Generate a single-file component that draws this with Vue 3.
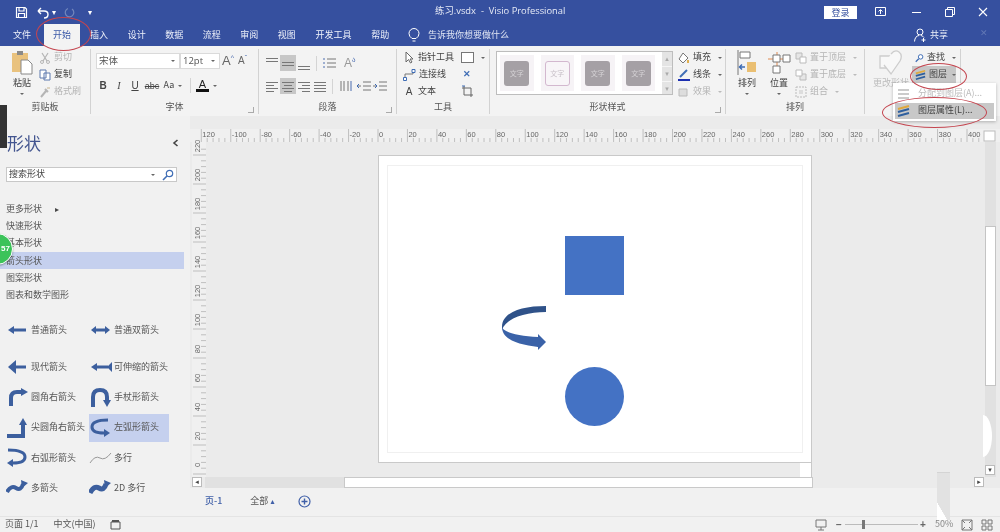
<script setup>
const tabs = ['文件', '开始', '插入', '设计', '数据', '流程', '审阅', '视图', '开发工具', '帮助']

const stencils = [
  { name: '更多形状', more: true },
  { name: '快速形状' },
  { name: '基本形状' },
  { name: '箭头形状', active: true },
  { name: '图案形状' },
  { name: '图表和数学图形' },
]

const shapes = [
  { name: '普通箭头', d: 'M5 11H20', head: '8,7 2,11 8,15', w: 3 },
  { name: '普通双箭头', d: 'M6 11H17', head: '7,7 2,11 7,15 M16,7 21,11 16,15', w: 3 },
  { name: '现代箭头', d: 'M6 11H20', head: '10,4 2,11 10,18', w: 3 },
  { name: '可伸缩的箭头', d: 'M6 11H19', head: '8,7 2,11 8,15 M23,6 18,11 23,16', w: 3 },
  { name: '圆角右箭头', d: 'M5 19V11Q5 5 11 5H16', head: '15,1 22,5 15,9', w: 4 },
  { name: '手杖形箭头', d: 'M4 20V10Q4 3 11 3Q18 3 18 10V14', head: '14,13 18,20 22,13', w: 4 },
  { name: '尖圆角右箭头', d: 'M1 19H17V7', head: '13,8 17,1 21,8', w: 4 },
  { name: '左弧形箭头', d: 'M19 3Q3 3 3 10Q3 16 15 16', head: '15,12 21,16 15,20', w: 3 },
  { name: '右弧形箭头', d: 'M2 3Q19 3 19 10Q19 16 7 16', head: '7,12 1,16 7,20', w: 3 },
  { name: '多行', d: 'M1 16Q6 8 11 11T22 6', head: '', w: 1, thin: true },
  { name: '多箭头', d: 'M1 15Q5 8 10 11T17 7', head: '15,3 22,6 16,11', w: 4 },
  { name: '2D 多行', d: 'M1 16Q5 8 10 11T17 7', head: '15,3 22,6 16,11', w: 5 },
]

const styleItems = [{}, { outline: true }, {}, {}]

const vAlign = [
  { sel: false, lines: [[2, 14, 3], [2, 14, 6]] },
  { sel: true, lines: [[2, 14, 7], [2, 14, 10]] },
  { sel: false, lines: [[2, 14, 11], [2, 14, 14]] },
]
const hAlign = [
  { sel: false, lines: [[2, 14, 4], [2, 10, 7], [2, 14, 10], [2, 10, 13]] },
  { sel: true, lines: [[2, 14, 4], [4, 12, 7], [2, 14, 10], [4, 12, 13]] },
  { sel: false, lines: [[2, 14, 4], [6, 14, 7], [2, 14, 10], [6, 14, 13]] },
  { sel: false, lines: [[2, 14, 4], [2, 14, 7], [2, 14, 10], [2, 14, 13]] },
]

// ruler maths, 0 sits at the page corner
const hTicks = []
for (let v = -120; v <= 410; v += 4) {
  hTicks.push({ x: 188 + (v * 29.45) / 20, major: v % 20 === 0, label: v })
}
const vTicks = []
for (let v = 0; v <= 225; v += 4) {
  vTicks.push({ y: 323 - (v * 29) / 20, major: v % 20 === 0, label: v })
}
</script>

<template>
<div class="app">
  <header class="titlebar">
    <div class="quick">
      <svg width="13" height="13" viewBox="0 0 13 13"><path d="M1.500 1.500H10L11.500 3V11.500H1.500ZM4 1.500V5H9V1.500M3.500 11.500V7.500H9.500V11.500" fill="none" stroke="#fff" stroke-width="1.200"/></svg>
      <svg class="undo" width="14" height="13" viewBox="0 0 14 13"><path d="M2 5H8Q12 5 12 8.500T8 12M2 5L5 2M2 5L5 8" fill="none" stroke="#fff" stroke-width="1.400"/></svg>
      <span class="caret">▾</span>
      <svg class="redo" width="12" height="13" viewBox="0 0 12 13"><path d="M9 3A4.300 4.300 0 1 1 5 2.500" fill="none" stroke="#7387bd" stroke-width="1.200"/></svg>
      <span class="caret quick-more">▾</span>
    </div>
    <div class="doc-title">练习.vsdx&nbsp; -&nbsp; Visio Professional</div>
    <div class="window-btns">
      <span class="login">登录</span>
      <svg width="11" height="10" viewBox="0 0 11 10"><path d="M.5 .5H10.500V8.500H.5ZM5.500 7V3M3.500 4.500 5.500 2.500 7.500 4.500" fill="none" stroke="#fff"/></svg>
      <span class="min"></span>
      <svg width="10" height="10" viewBox="0 0 10 10"><path d="M.5 2.500H7.500V9.500H.5ZM2.500 2.500V.5H9.500V7.500H7.500" fill="none" stroke="#fff"/></svg>
      <svg width="10" height="10" viewBox="0 0 10 10"><path d="M1 1 9 9M9 1 1 9" stroke="#fff" stroke-width="1.100"/></svg>
    </div>
  </header>

  <nav class="tabbar">
    <span v-for="tab in tabs" :key="tab" class="tab" :class="{ active: tab === '开始', wide: tab === '开发工具' }">{{ tab }}</span>
    <span class="tell">
      <svg width="12" height="15" viewBox="0 0 12 15"><path d="M4 10.500Q1 8.500 1 5.500A5 5 0 0 1 11 5.500Q11 8.500 8 10.500ZM4.500 13H7.500" fill="none" stroke="#fff"/></svg>
      告诉我你想要做什么
    </span>
    <span class="share">
      <svg width="14" height="14" viewBox="0 0 14 14"><path d="M7 7A3 3 0 1 0 7 1 3 3 0 0 0 7 7ZM1.500 13.500Q2 8 6 7.500M8 7.500Q10 8 11 9.500M10.500 10V14M8.500 12H12.500" fill="none" stroke="#fff"/></svg>
      共享
    </span>
    <span class="share-x">✕</span>
  </nav>

  <section class="ribbon">
    <div class="group g-clip">
      <div class="group-body">
        <div class="big">
          <svg width="22" height="27" viewBox="0 0 22 27"><path d="M1 4H17V23H1Z" fill="#e9c27e"/><path d="M6 2H12V6H6Z" fill="#8a8a8a"/><path d="M10 11H17L21 15V25H10Z" fill="#fff" stroke="#888"/></svg>
          <span>粘贴</span>
          <i class="chev"></i>
        </div>
        <div class="stack">
          <div class="mini off"><svg width="12" height="12" viewBox="0 0 12 12"><path d="M3 1 8 9M9 1 4 9" stroke="#b5b5b5" stroke-width="1.200"/><circle cx="3" cy="10" r="1.500" fill="none" stroke="#b5b5b5"/><circle cx="9" cy="10" r="1.500" fill="none" stroke="#b5b5b5"/></svg>剪切</div>
          <div class="mini"><svg width="12" height="12" viewBox="0 0 12 12"><path d="M1 1H7V9H1ZM5 4H11V11H5Z" fill="#fff" stroke="#5c78ad"/></svg>复制</div>
          <div class="mini off"><svg width="12" height="12" viewBox="0 0 12 12"><path d="M2 11 7 5M6 3 9 6" stroke="#b5b5b5" stroke-width="2"/><path d="M9 1V3M11 2H10" stroke="#c9b58e"/></svg>格式刷</div>
        </div>
      </div>
      <div class="group-label">剪贴板</div>
    </div>

    <div class="group g-font">
      <div class="group-body col">
        <div class="font-row">
          <span class="select font-name">宋体<i class="chev"></i></span>
          <span class="select font-size">12pt<i class="chev"></i></span>
          <span class="grow-a">A<sup>^</sup></span>
          <span class="grow-a small-a">A<sup>ˇ</sup></span>
        </div>
        <div class="font-row second">
          <b class="cell">B</b><i class="cell it">I</i><u class="cell">U</u><span class="cell abc">abc</span><span class="cell aa">Aa<i class="chev inline"></i></span>
          <span class="sep"></span>
          <span class="color-a">A</span><i class="chev inline"></i>
        </div>
      </div>
      <div class="group-label">字体</div>
      <i class="launcher"></i>
    </div>

    <div class="group g-para">
      <div class="group-body col">
        <div class="para-row">
          <svg v-for="(a, i) in vAlign" :key="i" class="para-icon" :class="{ sel: a.sel }" viewBox="0 0 16 16"><path v-for="(l, j) in a.lines" :key="j" :d="`M${l[0]} ${l[2]}.5H${l[1]}`" stroke="#777"/></svg>
          <span class="sep para-sep"></span>
          <svg class="para-icon" viewBox="0 0 16 16"><path d="M5 4H14M5 8H14M5 12H14" stroke="#777"/><path d="M1 4H3M1 8H3M1 12H3" stroke="#4a6cb0"/></svg>
          <span class="a-big">A<sup>ა</sup></span>
        </div>
        <div class="para-row second">
          <svg v-for="(a, i) in hAlign" :key="i" class="para-icon" :class="{ sel: a.sel }" viewBox="0 0 16 16"><path v-for="(l, j) in a.lines" :key="j" :d="`M${l[0]} ${l[2]}.5H${l[1]}`" stroke="#777"/></svg>
          <span class="sep"></span>
          <svg class="para-icon" viewBox="0 0 16 16"><path d="M3 3V13M6 3V13M10 3V13" stroke="#777"/><path d="M13 3V13" stroke="#4a6cb0"/></svg>
          <svg class="para-icon indent" viewBox="0 0 16 16"><path d="M7 4H15M7 8H15M7 12H15M1 8H5" stroke="#777"/><path d="M3 6 1 8 3 10" fill="none" stroke="#3c6ab5"/></svg>
          <svg class="para-icon" viewBox="0 0 16 16"><path d="M7 4H15M7 8H15M7 12H15M1 8H5" stroke="#777"/><path d="M3 6 5 8 3 10" fill="none" stroke="#3c6ab5"/></svg>
        </div>
      </div>
      <div class="group-label">段落</div>
      <i class="launcher"></i>
    </div>

    <div class="group g-tools">
      <div class="stack">
        <div class="mini tool">
          <svg width="12" height="13" viewBox="0 0 12 13"><path d="M3 1V11L5.500 8.500 7.500 12 9 11 7 8H10Z" fill="#fff" stroke="#666"/></svg>指针工具
          <span class="tool-rect"></span><i class="chev inline"></i>
        </div>
        <div class="mini tool">
          <svg width="13" height="12" viewBox="0 0 13 12"><path d="M2 9V5H10V3" fill="none" stroke="#777"/><path d="M.5 8.500H3.500V11.500H.5ZM9 .5H12V3.500H9Z" fill="#fff" stroke="#3f6db5"/></svg>连接线
          <span class="tool-x">✕</span>
        </div>
        <div class="mini tool">
          <span class="tool-a">A</span>文本
          <svg class="tool-crop" width="13" height="13" viewBox="0 0 13 13"><path d="M3 1V10H12M1 3H10V12" fill="none" stroke="#666"/><path d="M1 1H4" stroke="#3f6db5"/></svg>
        </div>
      </div>
      <div class="group-label">工具</div>
    </div>

    <div class="group g-styles">
      <div class="group-body">
        <div class="gallery">
          <div v-for="(s, i) in styleItems" :key="i" class="style-item">
            <span class="swatch" :class="{ outline: s.outline }">文字</span>
          </div>
          <div class="gallery-scroll"><i>▴</i><i>▾</i><i>▾</i></div>
        </div>
        <div class="stack fills">
          <div class="mini"><svg width="12" height="12" viewBox="0 0 12 12"><path d="M5 1 10 6 5 11 1 7Z" fill="#fff" stroke="#777"/><path d="M10 8V11" stroke="#e0b050" stroke-width="2"/></svg>填充<i class="chev inline"></i></div>
          <div class="mini"><svg width="12" height="12" viewBox="0 0 12 12"><path d="M2 8 9 1" stroke="#3f6db5" stroke-width="2"/><path d="M0 11H12" stroke="#1c2fb0" stroke-width="2"/></svg>线条<i class="chev inline"></i></div>
          <div class="mini off"><svg width="12" height="12" viewBox="0 0 12 12"><path d="M1 3H9V10H1Z" fill="#ddd" stroke="#bbb"/></svg>效果<i class="chev inline"></i></div>
        </div>
      </div>
      <div class="group-label">形状样式</div>
      <i class="launcher"></i>
    </div>

    <div class="group g-arrange">
      <div class="group-body">
        <div class="big">
          <svg width="22" height="27" viewBox="0 0 22 27"><path d="M2 1V26" stroke="#777"/><path d="M4 3H14V9H4Z" fill="#fff" stroke="#777"/><path d="M11 13H20V23H11Z" fill="#eabf72"/><path d="M4 18H9M6 15.500 3.500 18 6 20.500" fill="none" stroke="#3f6db5" stroke-width="1.500"/></svg>
          <span>排列</span>
          <i class="chev"></i>
        </div>
        <div class="big">
          <svg width="24" height="27" viewBox="0 0 24 27"><path d="M1 10H18M10 3V24" stroke="#e08a50"/><path d="M6 6H13V13H6ZM16 6H23V13H16ZM6 17H13V24H6Z" fill="#fff" stroke="#777"/></svg>
          <span>位置</span>
          <i class="chev"></i>
        </div>
        <div class="stack order">
          <div class="mini off"><svg width="12" height="12" viewBox="0 0 12 12"><path d="M1 1H7V7H1Z" fill="#e6e6e6" stroke="#bbb"/><path d="M5 5H11V11H5Z" fill="#fff" stroke="#bbb"/></svg>置于顶层<i class="chev inline"></i></div>
          <div class="mini off"><svg width="12" height="12" viewBox="0 0 12 12"><path d="M5 5H11V11H5Z" fill="#e6e6e6" stroke="#bbb"/><path d="M1 1H7V7H1Z" fill="#fff" stroke="#bbb"/></svg>置于底层<i class="chev inline"></i></div>
          <div class="mini off"><svg width="12" height="12" viewBox="0 0 12 12"><path d="M1 1H11V11H1Z" fill="none" stroke="#bbb" stroke-dasharray="2 1"/><path d="M4 4H8V8H4Z" fill="#ddd"/></svg>组合<i class="chev inline"></i></div>
        </div>
      </div>
      <div class="group-label">排列</div>
    </div>

    <div class="group g-edit">
      <div class="group-body">
        <div class="big change off">
          <svg width="24" height="27" viewBox="0 0 24 27"><path d="M1 7H13V19H1Z" fill="#f8f8f8" stroke="#cdcdcd" stroke-width="1.300"/><path d="M12 5Q16 0 20 3T21 12L12 25 5 16" fill="#f8f8f8" stroke="#cdcdcd" stroke-width="1.300"/></svg>
          <span>更改形状</span>
        </div>
        <div class="edit-col">
          <div class="mini"><svg width="12" height="12" viewBox="0 0 12 12"><circle cx="7.500" cy="4.500" r="3" fill="#fff" stroke="#3f6db5" stroke-width="1.300"/><path d="M5 7 1 11" stroke="#3f6db5" stroke-width="1.600"/></svg>查找<i class="chev inline"></i></div>
          <div class="mini layer-btn"><svg width="13" height="12" viewBox="0 0 13 12"><path d="M1 4 12 1" stroke="#e0a93e" stroke-width="2"/><path d="M1 7 12 4M1 11 12 8" stroke="#2f5f9e" stroke-width="2"/></svg>图层<i class="chev inline"></i></div>
        </div>
      </div>
    </div>
  </section>

  <main class="workspace">
    <aside class="sidebar">
      <div class="side-head">
        <h2>形状</h2>
        <svg width="7" height="8" viewBox="0 0 7 8"><path d="M5.500 1 2 4 5.500 7" fill="none" stroke="#444" stroke-width="1.600"/></svg>
      </div>
      <div class="search">
        <span>搜索形状</span>
        <i class="chev"></i>
        <svg width="12" height="12" viewBox="0 0 12 12"><circle cx="7.500" cy="4.500" r="3.200" fill="none" stroke="#3f6db5" stroke-width="1.200"/><path d="M5 7 1 11" stroke="#3f6db5" stroke-width="1.600"/></svg>
      </div>
      <ul class="stencils">
        <li v-for="s in stencils" :key="s.name" :class="{ active: s.active }">
          {{ s.name }}<span v-if="s.more" class="more">▸</span>
        </li>
      </ul>
      <div class="shape-grid">
        <div v-for="s in shapes" :key="s.name" class="shape-cell" :class="{ picked: s.name === '左弧形箭头' }">
          <svg width="24" height="22" viewBox="0 0 24 22">
            <path :d="s.d" fill="none" :stroke="s.thin ? '#999' : '#3c5f9e'" :stroke-width="s.w"/>
            <path v-if="s.head" :d="'M' + s.head" fill="#3c5f9e"/>
          </svg>
          <span>{{ s.name }}</span>
        </div>
      </div>
    </aside>

    <div class="drawing">
      <svg class="ruler-top" width="810" height="13" viewBox="0 0 810 13">
        <rect width="810" height="13" fill="#f0f0f0"/>
        <template v-for="t in hTicks" :key="t.label">
          <path :d="`M${t.x} ${t.major ? 0 : 9}V13`" stroke="#aaa" stroke-width=".7"/>
          <text v-if="t.major && t.x > 10 && t.x < 785" :x="t.x + 1" y="8" class="tick-label">{{ t.label === -120 ? 120 : t.label }}</text>
        </template>
        <rect x="794" y="2" width="11" height="10" fill="#fff" stroke="#bbb"/>
      </svg>
      <div class="drawing-mid">
        <svg class="ruler-left" width="14" height="335" viewBox="0 0 14 335">
          <rect width="14" height="335" fill="#f0f0f0"/>
          <template v-for="t in vTicks" :key="t.label">
            <path :d="`M${t.major ? 1 : 9} ${t.y + 9}H14`" stroke="#aaa" stroke-width=".7"/>
            <text v-if="t.major" class="tick-label v-label" :transform="`translate(8 ${t.y}) rotate(-90)`">{{ t.label }}</text>
          </template>
        </svg>
        <div class="canvas">
          <div class="page">
            <div class="page-inner"></div>
            <div class="square"></div>
            <div class="circle"></div>
            <svg class="curve" width="46" height="46" viewBox="0 0 46 46">
              <path d="M44 1C20 1 0 7 0 22V25C4 13 24 7 44 7Z" fill="#2f5289"/>
              <path d="M0 22C0 35 18 40 36 42V45L44 37 36 29V32C18 31 2 28 0 22Z" fill="#3a62a8"/>
            </svg>
          </div>
          <div class="page-tail"></div>
          <div class="vtrack">
            <div class="vthumb"></div>
          </div>
          <div class="vscroll-arc"></div>
          <span class="scroll-btn down">▾</span>
        </div>
      </div>
      <div class="hscroll">
        <span class="scroll-btn left">◂</span>
        <div class="hscroll-track"></div>
        <div class="hscroll-thumb"></div>
        <span class="scroll-btn right">▸</span>
      </div>
      <div class="page-tabs">
        <span class="page-name">页-1</span>
        <span class="page-all">全部 <i>▴</i></span>
        <svg width="13" height="13" viewBox="0 0 13 13"><circle cx="6.500" cy="6.500" r="5.500" fill="none" stroke="#3f5fa8" stroke-width="1.200"/><path d="M6.500 3.500V9.500M3.500 6.500H9.500" stroke="#3f5fa8" stroke-width="1.400"/></svg>
      </div>
    </div>
  </main>

  <footer class="statusbar">
    <span>页面 1/1</span>
    <span class="lang">中文(中国)</span>
    <svg width="11" height="11" viewBox="0 0 11 11"><path d="M1 3H10V10H1Z" fill="none" stroke="#555"/><path d="M2 1H9V3H2Z" fill="#555"/></svg>
    <span class="status-right">
      <svg width="13" height="13" viewBox="0 0 13 13"><path d="M2 2H12V9H2ZM7 9V12M4 12H10" fill="none" stroke="#777"/></svg>
      <span class="zoom-sign minus">−</span>
      <span class="slider"><i></i></span>
      <span class="zoom-sign">+</span>
      <span class="percent">50%</span>
      <svg width="12" height="12" viewBox="0 0 12 12"><path d="M1 1H11V11H1ZM1 1 4 4M11 1 8 4M1 11 4 8M11 11 8 8" fill="none" stroke="#777"/></svg>
      <svg width="12" height="12" viewBox="0 0 12 12"><path d="M1 1H5V5H1ZM7 1H11V5H7ZM1 7H5V11H1ZM7 7H11V11H7Z" fill="none" stroke="#777"/></svg>
    </span>
  </footer>

  <!-- popup and the hand drawn red circles lie over everything -->
  <div class="layer-menu">
    <div class="menu-item muted">
      <svg width="13" height="12" viewBox="0 0 13 12"><path d="M1 3H12M1 7H12M1 11H12" stroke="#bbb" stroke-width="1.500"/></svg>
      分配到图层(A)...
    </div>
    <div class="menu-item hot">
      <svg width="13" height="12" viewBox="0 0 13 12"><path d="M1 4 12 1" stroke="#e0a93e" stroke-width="2"/><path d="M1 7 12 4M1 11 12 8" stroke="#2f5f9e" stroke-width="2"/></svg>
      图层属性(L)...
    </div>
  </div>
  <i class="ring ring-tab"></i>
  <i class="ring ring-layer"></i>
  <i class="ring ring-props"></i>
  <span class="grip"></span>
  <span class="badge">57</span>
  <span class="streak"></span>
</div>
</template>

<style>
html, body { margin: 0; overflow: hidden; }
</style>

<style scoped>
.app { position: relative; width: 1000px; height: 532px; overflow: hidden; display: flex; flex-direction: column; font: 9px/1.2 "Noto Sans CJK SC", "Liberation Sans", sans-serif; color: #555; background: #ebebeb; filter: blur(.35px); }

.titlebar { flex: 0 0 24px; display: flex; align-items: center; position: relative; background: #36509f; color: #fff; }
.quick { display: flex; align-items: center; padding-left: 15px; }
.undo { margin-left: 8px; }
.caret { font-size: 8px; margin-left: 2px; }
.redo { margin-left: 7px; }
.quick-more { margin-left: 13px; }
.doc-title { position: absolute; left: 435px; top: 4px; font-family: "Open Sans", "Noto Sans CJK SC", sans-serif; font-size: 9.400px; line-height: 13px; color: #e6eaf6; }
.window-btns { margin-left: auto; display: flex; align-items: center; gap: 23px; padding-right: 12px; }
.login { width: 33px; height: 13px; margin-right: -5px; background: #fff; color: #36509f; text-align: center; line-height: 13px; }
.min { width: 9px; height: 1px; margin: 0 1px 0 3px; background: #fff; }

.tabbar { flex: 0 0 22px; display: flex; align-items: stretch; position: relative; background: #36509f; color: #eef1fa; }
.tab { width: 37.500px; text-align: center; line-height: 22px; flex: none; }
.tab:first-child { width: 44px; }
.tab.wide { width: 56px; }
.tab.active { color: #3c5aa8; background: #f3f3f3; width: 36px; }
.tab:nth-child(3) { width: 38px; }
.tell { margin-left: 9px; display: flex; align-items: center; gap: 8px; color: #dfe4f3; }
.share { margin-left: auto; display: flex; align-items: center; gap: 3px; font-size: 9px; }
.share-x { margin: 4px 12px 0 32px; color: #6378b5; font-size: 9px; }

.ribbon { flex: 0 0 70px; display: flex; background: #f3f3f3; }
.group { position: relative; display: flex; flex-direction: column; margin: 3px 0 2px; border-right: 1px solid #d2d2d2; box-sizing: border-box; }
.group-body { flex: 1; display: flex; min-height: 0; }
.group-body.col { flex-direction: column; }
.group-label { flex: 0 0 14px; text-align: center; line-height: 14px; color: #555; }
.g-clip { width: 91px; }
.g-font { width: 168px; }
.g-para { width: 138px; }
.g-tools { width: 93px; }
.g-styles { width: 236px; }
.g-arrange { width: 139px; }
.g-edit { width: 96px; }
.launcher { position: absolute; right: 4px; bottom: 1px; width: 5px; height: 5px; border: solid #aaa; border-width: 0 1px 1px 0; }

.big { width: 32px; flex: none; display: flex; flex-direction: column; align-items: center; }
.big svg { height: 27px; margin-bottom: 1px; }
.big span { line-height: 11px; color: #444; }
.chev { display: block; width: 0; height: 0; margin-top: 5px; border: 2px solid transparent; border-top: 2.500px solid #666; border-bottom: 0; }
.chev.inline { display: inline-block; margin: 0 0 0 4px; vertical-align: middle; }
.stack { display: flex; flex-direction: column; }
.mini { height: 17px; display: flex; align-items: center; gap: 3px; color: #444; white-space: nowrap; }
.mini.off, .off span { color: #b4b4b4; }
.mini.off .chev { border-top-color: #bbb; }

.g-clip .big { margin-left: 6px; }
.g-clip .stack { margin-left: 1px; }

.font-row { display: flex; align-items: center; height: 17px; margin: 3px 0 0 5px; }
.font-row.second { margin: 8px 0 0 4px; color: #444; }
.cell { width: 16px; text-align: center; }
.abc { width: 18px; }
.aa { width: 24px; margin-right: 5px; }
.select { display: flex; align-items: center; justify-content: space-between; box-sizing: border-box; height: 16px; background: #fff; border: 1px solid #dadada; padding: 0 4px 0 2px; color: #555; font-size: 9.500px; }
.select .chev { margin-top: 0; }
.font-name { width: 84px; }
.font-size { width: 40px; margin-right: 2px; font-family: "Open Sans", sans-serif; }
.grow-a { width: 16px; font: 13px "Liberation Sans", sans-serif; color: #666; }
.grow-a sup, .a-big sup { font-size: 7px; color: #4a6cb0; }
.small-a { font-size: 10px; }
.it { font: italic 10px "Liberation Serif", serif; }
.font-row b, .font-row u { font: 10px "Liberation Sans", sans-serif; }
.font-row b { font-weight: 700; }
.abc { font: 9px "Liberation Sans", sans-serif; text-decoration: line-through; }
.sep { width: 1px; height: 15px; background: #d4d4d4; }
.color-a { width: 13px; margin-left: 5px; text-align: center; color: #222; font: 11px/10px "Liberation Sans", sans-serif; border-bottom: 3px solid #111; }

.para-row { display: flex; align-items: center; height: 16px; margin: 6px 0 0 5px; }
.para-row.second { margin-top: 7px; }
.para-icon { width: 16px; height: 16px; flex: none; }
.para-icon.sel { background: #c7c7c7; }
.para-row .sep { margin: 0 5px 0 4px; }
.para-sep { margin-left: 4px; }
.a-big { margin-left: 6px; font: 12px "Liberation Sans", sans-serif; color: #999; }
.para-icon.indent { margin-left: 2px; }

.g-tools .stack { flex: 1; padding-left: 6px; }
.tool { position: relative; }
.tool-rect { width: 11px; height: 9px; margin-left: 4px; border: 1px solid #777; background: #fff; }
.tool-x { position: absolute; left: 60px; color: #3f6db5; font-size: 9px; font-weight: 700; }
.tool-a { width: 12px; text-align: center; font: 10px "Liberation Sans", sans-serif; color: #444; }
.tool-crop { position: absolute; left: 58px; }

.gallery { display: flex; align-items: center; box-sizing: border-box; width: 177px; height: 44px; margin: 2px 5px 0 6px; padding-left: 3px; background: #fff; border: 1px solid #bdbdbd; }
.style-item { width: 34px; height: 36px; margin-right: 7px; display: flex; align-items: center; justify-content: center; background: #f6f3f6; }
.swatch { width: 25px; height: 25px; display: flex; align-items: center; justify-content: center; background: #a5a0a5; border-radius: 3px; color: #d5d2d5; font-size: 7px; }
.swatch.outline { background: #f8f5f8; box-sizing: border-box; border: 1px solid #d3b8cf; color: #c8c0c8; }
.gallery-scroll { margin-left: auto; width: 10px; height: 42px; display: flex; flex-direction: column; background: #e4e4e4; }
.gallery-scroll i { flex: 1; text-align: center; font: 7px/14px "DejaVu Sans", sans-serif; color: #aaa; border-bottom: 1px solid #f5f5f5; }
.fills { margin-left: 0; }

.g-arrange .big { margin-left: 5px; margin-right: 0; }
.g-arrange .big + .big { margin-right: 0; margin-left: 0; }
.order { margin-left: 0; }

.change { width: 40px; margin-left: 6px; }
.change span { white-space: nowrap; color: #bbb; }
.edit-col { margin-left: 1px; }
.edit-col .mini { padding-left: 3px; }
.layer-btn { background: #c6c6c6; }
.layer-btn .chev { margin-left: 2px; }
.edit-col .mini { width: 44px; box-sizing: border-box; }

.workspace { flex: 1; display: flex; min-height: 0; }
.sidebar { width: 190px; flex: none; box-sizing: border-box; padding-right: 6px; background: #f1f1f1; }
.side-head { display: flex; align-items: center; justify-content: space-between; padding: 15px 5px 0 7px; height: 24px; }
.side-head h2 { margin: 0; font: 400 17px/24px "Noto Sans CJK SC", sans-serif; color: #43558f; }
.search { display: flex; align-items: center; height: 15px; margin: 12px 7px 0 6px; box-sizing: border-box; padding: 0 2px; background: #fff; border: 1px solid #c8c8c8; color: #444; }
.search .chev { margin: 0 7px 0 auto; }
.stencils { list-style: none; margin: 18px 0 0; padding: 0; }
.stencils li { height: 17.200px; line-height: 17px; padding-left: 6px; }
.stencils li.active { background: #c5d0ee; }
.more { margin-left: 13px; color: #444; font-size: 8px; }
.shape-grid { display: grid; grid-template-columns: 83px 80px; grid-template-rows: 33px repeat(5, 30.300px); margin: 16px 0 0 6px; }
.shape-cell { display: flex; align-items: center; gap: 1px; }
.shape-cell:nth-child(-n+2) { align-self: start; height: 22px; }
.shape-cell:nth-child(n+3) { align-self: center; height: 28px; }
.shape-cell.picked { background: #c5d0ee; }
.shape-cell span { white-space: nowrap; }

.drawing { flex: 1; display: flex; flex-direction: column; min-width: 0; padding-top: 13px; }
.ruler-top { display: block; flex: none; }
.drawing-mid { flex: 0 0 335px; display: flex; padding-left: 2px; }
.ruler-left { display: block; flex: none; overflow: visible; }
.tick-label { font: 7.500px "Liberation Sans", sans-serif; fill: #666; }
.v-label { text-anchor: middle; }
.canvas { position: relative; flex: 1; overflow: hidden; background: #ebebeb; }
.page { position: absolute; left: 172px; top: 13px; width: 434px; height: 308px; background: #fff; box-sizing: border-box; border: 1px solid #c9c9c9; }
.page-inner { position: absolute; left: 8px; top: 9px; right: 8px; bottom: 9px; border: 1px solid #f0f0f0; }
.square { position: absolute; left: 186px; top: 80px; width: 59px; height: 59px; background: #4472c4; }
.circle { position: absolute; left: 186px; top: 211px; width: 59px; height: 59px; border-radius: 50%; background: #4472c4; }
.curve { position: absolute; left: 123px; top: 149px; }
.page-tail { position: absolute; left: 594px; top: 321px; width: 11px; height: 14px; background: #fff; border-right: 1px solid #c9c9c9; }
.vtrack { position: absolute; left: 779px; top: 0; bottom: 0; width: 11px; background: #e1e1e1; }
.vthumb { box-sizing: border-box; height: 160px; margin-top: 84px; background: #fff; border: 1px solid #c4c4c4; }
.vscroll-arc { position: absolute; left: 777px; top: 273px; width: 9px; height: 42px; border-radius: 0 100% 100% 0 / 0 50% 50% 0; background: #fff; }
.scroll-btn { width: 10px; height: 10px; box-sizing: border-box; display: flex; align-items: center; justify-content: center; background: #fff; border: 1px solid #bbb; color: #444; font: 7px "DejaVu Sans", sans-serif; flex: none; }
.down { position: absolute; left: 779px; top: 323px; }

.hscroll { position: relative; flex: 0 0 11px; display: flex; padding-left: 2px; }
.hscroll-track { width: 139px; margin-left: 3px; background: #e1e1e1; }
.hscroll-thumb { width: 469px; background: #fff; box-sizing: border-box; border: 1px solid #c9c9c9; }
.scroll-btn.right { margin-left: 161px; }

.page-tabs { flex: 1; display: flex; align-items: center; padding-bottom: 2px; background: #f1f1f1; padding-left: 15px; }
.page-name { color: #3f5fa8; font-weight: 500; margin-right: 28px; }
.page-all { margin-right: 24px; }
.page-all i { font: 8px "DejaVu Sans", sans-serif; color: #3f5fa8; }

.statusbar { flex: 0 0 16px; display: flex; align-items: center; padding-left: 5px; background: #f1f1f1; border-top: 1px solid #e4e4e4; box-sizing: border-box; color: #555; }
.lang { margin: 0 14px 0 15px; }
.status-right { margin-left: auto; display: flex; align-items: center; padding-right: 7px; }
.zoom-sign { width: 10px; text-align: center; font: 700 10px "Liberation Sans", sans-serif; color: #666; }
.zoom-sign.minus { margin-left: 7px; }
.slider { position: relative; width: 73px; height: 1px; background: #bbb; margin-left: 1px; }
.slider i { position: absolute; left: 17px; top: -4px; width: 3px; height: 9px; background: #777; }
.percent { width: 16px; margin: 0 10px 0 7px; color: #888; white-space: nowrap; }
.status-right > svg:last-child { margin-left: 8px; }

.layer-menu { position: absolute; left: 893px; top: 83px; width: 103px; height: 38px; box-sizing: border-box; padding: 2px; display: flex; flex-direction: column; justify-content: flex-end; background: #fff; box-shadow: 0 1px 3px rgba(0, 0, 0, .25); }
.menu-item { height: 17px; display: flex; align-items: center; gap: 8px; padding-left: 2px; white-space: nowrap; }
.menu-item.muted { color: #bbb; }
.menu-item.hot { background: #c8c8c8; color: #444; margin-top: 1px; }
.ring { position: absolute; box-sizing: border-box; border: 1px solid #c4454f; border-radius: 50%; }
.ring-tab { left: 36px; top: 17px; width: 55px; height: 34px; }
.ring-layer { left: 910px; top: 63px; width: 57px; height: 27px; }
.ring-props { left: 882px; top: 97px; width: 105px; height: 31px; }
.grip { position: absolute; left: 0; top: 105px; width: 7px; height: 43px; background: #333; }
.badge { position: absolute; left: -19px; top: 233px; width: 32px; height: 32px; box-sizing: border-box; padding-left: 19px; border-radius: 50%; background: #3cc35a; border: 1px solid #fff; color: #fff; font: 700 8px/30px "Liberation Sans", sans-serif; box-shadow: 0 1px 2px rgba(0, 0, 0, .3); }
.streak { position: absolute; left: 937px; top: 472px; width: 13px; height: 47px; border-top: 1px solid #d4d4d4; background: linear-gradient(60deg, #fff 0 25%, #e2e2e2 26%); }
</style>
